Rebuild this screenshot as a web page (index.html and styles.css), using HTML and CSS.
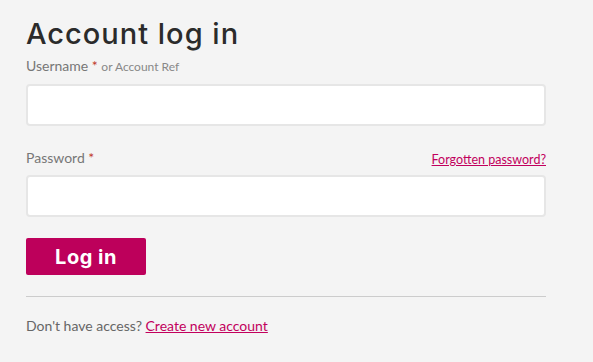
FILE: index.html
```html
<!DOCTYPE html>
<html lang="en">
<head>
    <meta charset="UTF-8">
    <meta name="viewport" content="width=device-width, initial-scale=1.0">
    <title>Account log in</title>
    <link rel="stylesheet" href="styles.css">
</head>
<body>
    <!-- Login form -->
    <div class="login">
        <h1 class="login-title">Account log in</h1>

        <div class="field">
            <div class="field-label">
                <label for="username">Username <span class="req">*</span> <small>or Account Ref</small></label>
            </div>
            <input type="text" id="username" class="field-input">
        </div>

        <div class="field field-last">
            <div class="field-label">
                <label for="password">Password <span class="req">*</span></label>
                <a href="#" class="link small-link">Forgotten password?</a>
            </div>
            <input type="password" id="password" class="field-input">
        </div>

        <button class="btn-login">Log in</button>

        <hr class="divider">

        <p class="signup">Don't have access? <a href="#" class="link">Create new account</a></p>
    </div>
</body>
</html>
```

FILE: styles.css
```css
body {
    margin: 0;
    background: #f4f4f4;
    font-family: 'Lato', sans-serif;
    color: #666;
}

.login {
    width: 520px;
    padding: 16px 0 0 26px;
}

/* Title */
.login-title {
    margin: 0 0 5px;
    font-family: 'Inter', sans-serif;
    font-size: 29px;
    font-weight: 500;
    letter-spacing: 1px;
    color: #2b2b2b;
    line-height: 36px;
}

/* Fields */
.field {
    margin-bottom: 23px;
}

.field-last {
    margin-bottom: 21px;
}

.field-label {
    display: flex;
    justify-content: space-between;
    align-items: flex-end;
    margin-bottom: 8px;
    font-size: 14px;
    line-height: 18px;
    color: #777;
}

.field-label small {
    font-size: 12px;
    color: #888;
}

.req {
    color: #c0392b;
}

.field-input {
    display: block;
    box-sizing: border-box;
    width: 100%;
    height: 42px;
    border: 2px solid #e6e6e6;
    border-radius: 4px;
    background: #fff;
}

/* Links */
.link {
    color: #c2005d;
}

.small-link {
    font-size: 12.5px;
    position: relative;
    top: 2px;
}

/* Button */
.btn-login {
    display: block;
    width: 120px;
    height: 37px;
    border: none;
    border-radius: 2px;
    background: #bd005b;
    color: #fff;
    font-family: 'Inter', sans-serif;
    font-size: 20px;
    font-weight: 700;
    letter-spacing: 0.5px;
}

.divider {
    margin: 21px 0 0;
    border: none;
    border-top: 1px solid #ccc;
}

.signup {
    margin: 20px 0 0;
    font-size: 14px;
    color: #666;
}
```
